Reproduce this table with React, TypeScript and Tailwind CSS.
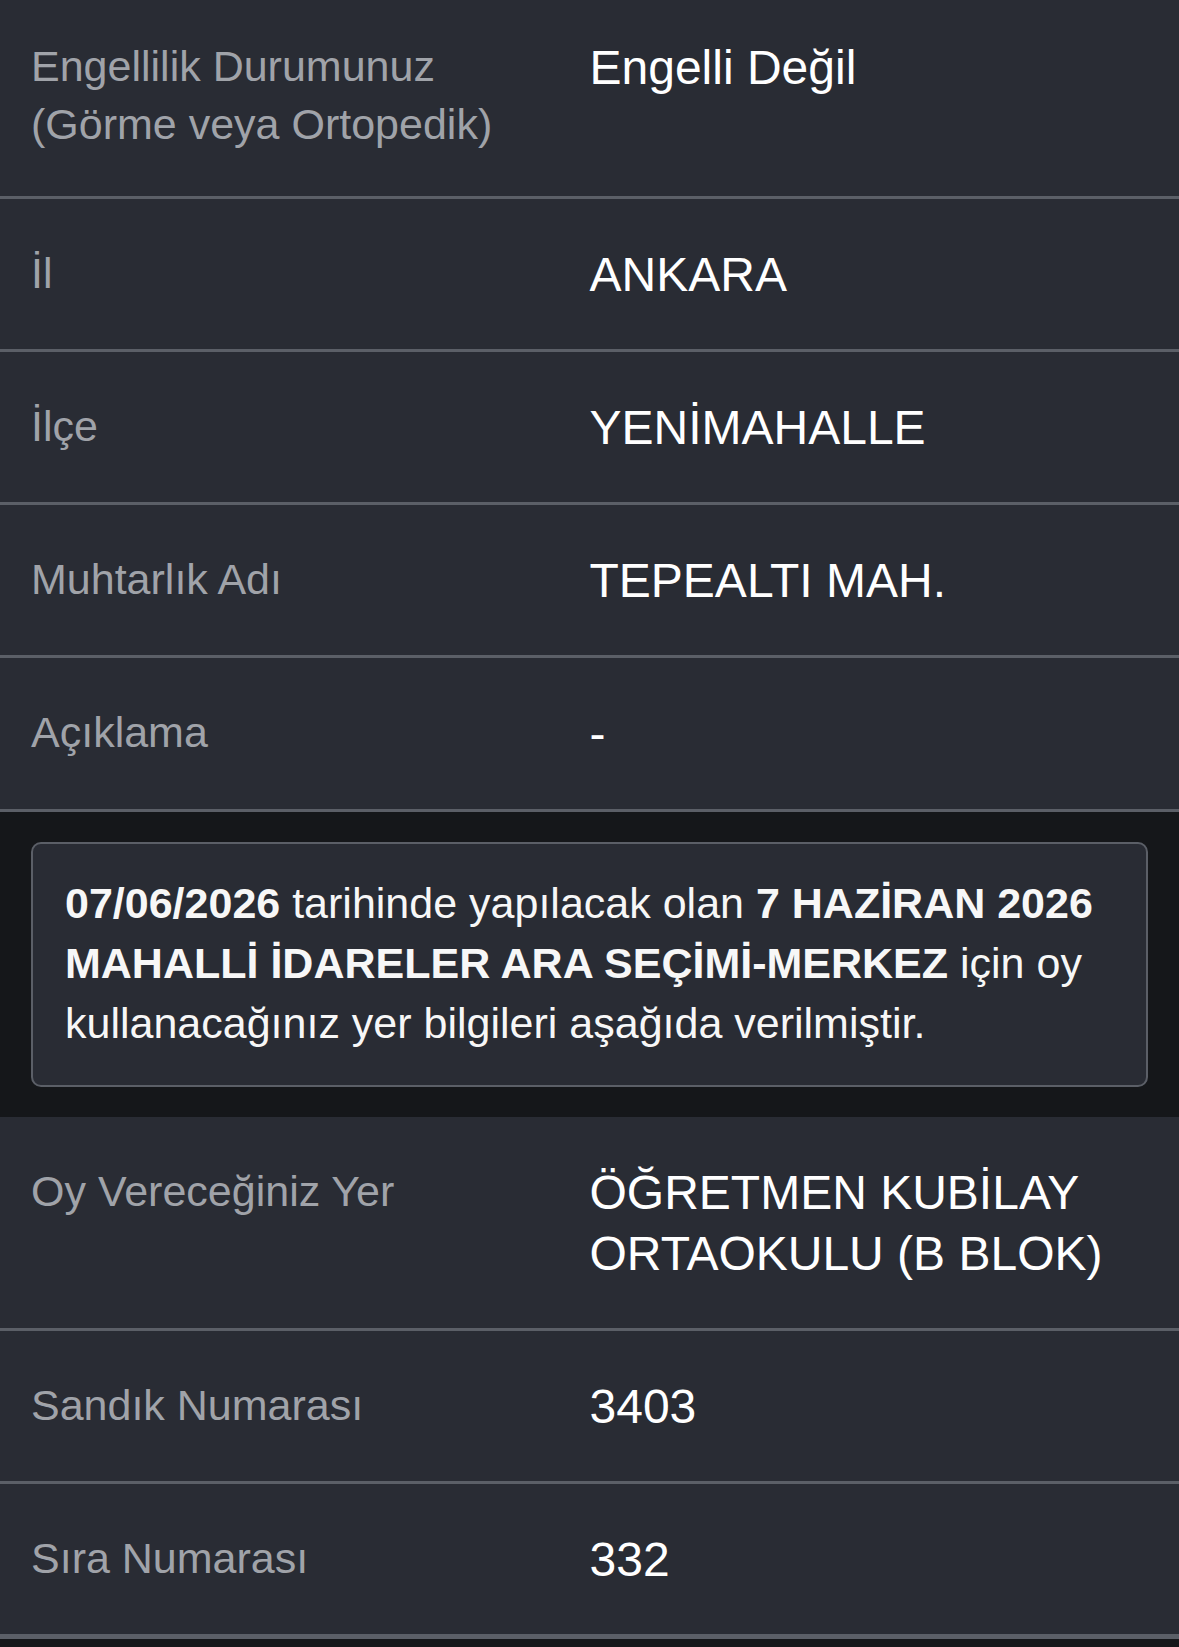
import React from 'react';

interface Row {
  label: string[];
  value: string;
  pad: string;
}

const topRows: Row[] = [
  { label: ['Engellilik Durumunuz', '(Görme veya Ortopedik)'], value: 'Engelli Değil', pad: 'pt-[37px] pb-[43px]' },
  { label: ['İl'], value: 'ANKARA', pad: 'pt-[45px] pb-[44px]' },
  { label: ['İlçe'], value: 'YENİMAHALLE', pad: 'pt-[45px] pb-[44px]' },
  { label: ['Muhtarlık Adı'], value: 'TEPEALTI MAH.', pad: 'pt-[45px] pb-[44px]' },
  { label: ['Açıklama'], value: '-', pad: 'pt-[45px] pb-[45px]' },
];

const bottomRows: Row[] = [
  { label: ['Oy Vereceğiniz Yer'], value: 'ÖĞRETMEN KUBİLAY ORTAOKULU (B BLOK)', pad: 'pt-[45px] pb-[44px]' },
  { label: ['Sandık Numarası'], value: '3403', pad: 'pt-[45px] pb-[44px]' },
  { label: ['Sıra Numarası'], value: '332', pad: 'pt-[45px] pb-[44px]' },
];

const InfoRow: React.FC<{ row: Row; last?: boolean }> = ({ row, last }) => {
  return (
    <div
      className={`grid grid-cols-2 bg-[#292c34] border-[#5b5f67] ${row.pad} ${
        last ? 'border-b-[5px]' : 'border-b-[3px]'
      }`}
    >
      <div className="pl-[31px] pr-4 text-[43px] leading-[58px] text-[#a0a3a9]">
        {row.label.map((l) => (
          <div key={l}>{l}</div>
        ))}
      </div>
      <div className="pr-[31px] text-[48px] leading-[61px] text-white">{row.value}</div>
    </div>
  );
};

const App: React.FC = () => {
  return (
    <div
      className="min-h-screen w-full bg-[#15171a]"
      style={{ fontFamily: '"Liberation Sans", Arial, Helvetica, sans-serif' }}
    >
      {topRows.map((r) => (
        <InfoRow key={r.value} row={r} />
      ))}

      {/* election notice */}
      <div className="bg-[#15171a] px-[31px] pt-[30px] pb-[30px]">
        <div className="rounded-[10px] border-2 border-[#5b5f67] bg-[#292c34] px-[32px] pt-[29px] pb-[32px] text-[43px] leading-[60px] text-[#f7f7f7]">
          <span className="font-bold">07/06/2026</span> tarihinde yapılacak olan{' '}
          <span className="font-bold">7 HAZİRAN 2026 MAHALLİ İDARELER ARA SEÇİMİ-MERKEZ</span> için oy
          kullanacağınız yer bilgileri aşağıda verilmiştir.
        </div>
      </div>

      {bottomRows.map((r, i) => (
        <InfoRow key={r.value} row={r} last={i === bottomRows.length - 1} />
      ))}
    </div>
  );
};

export default App;
